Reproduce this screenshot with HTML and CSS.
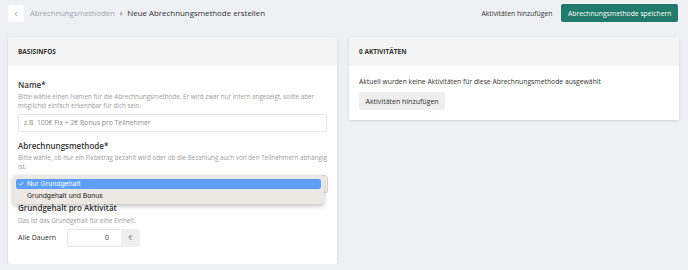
FILE: index.html
```html
<!DOCTYPE html>
<html lang="de">
<head>
    <meta charset="UTF-8">
    <meta name="viewport" content="width=device-width, initial-scale=1.0">
    <title>Neue Abrechnungsmethode erstellen</title>
    <link rel="stylesheet" href="styles.css">
</head>
<body>
    <div class="topbar">
        <div class="crumbs">
            <button type="button" class="back">&lsaquo;</button>
            <span class="crumb-parent">Abrechnungsmethoden</span>
            <span class="crumb-sep">&rsaquo;</span>
            <span class="crumb-current">Neue Abrechnungsmethode erstellen</span>
        </div>
        <div class="actions">
            <button type="button" class="link-btn">Aktivitäten hinzufügen</button>
            <button type="button" class="primary-btn">Abrechnungsmethode speichern</button>
        </div>
    </div>

    <div class="columns">
        <div class="card card-left">
            <div class="card-head">Basisinfos</div>
            <div class="card-body">
                <div class="field">
                    <div class="label">Name*</div>
                    <div class="help">Bitte wähle einen Namen für die Abrechnungsmethode. Er wird zwar nur intern angezeigt, sollte aber möglichst einfach erkennbar für dich sein.</div>
                    <input type="text" class="text-input" placeholder="z.B. 100€ Fix + 2€ Bonus pro Teilnehmer">
                </div>

                <div class="field field-select">
                    <div class="label">Abrechnungsmethode*</div>
                    <div class="help">Bitte wähle, ob nur ein Fixbetrag bezahlt wird oder ob die Bezahlung auch von den Teilnehmern abhängig ist.</div>
                    <div class="select-wrap">
                        <div class="select-box"></div>
                        <div class="popup">
                            <div class="option selected"><span class="check">✓</span>Nur Grundgehalt</div>
                            <div class="option">Grundgehalt und Bonus</div>
                        </div>
                    </div>
                </div>

                <div class="field field-last">
                    <div class="label">Grundgehalt pro Aktivität</div>
                    <div class="help">Das ist das Grundgehalt für eine Einheit.</div>
                    <div class="amount-row">
                        <span class="amount-label">Alle Dauern</span>
                        <div class="amount-group">
                            <input type="text" class="amount-input" value="0">
                            <span class="addon">€</span>
                        </div>
                    </div>
                </div>
            </div>
        </div>

        <div class="card card-right">
            <div class="card-head">0 Aktivitäten</div>
            <div class="card-body card-body-short">
                <p class="empty">Aktuell wurden keine Aktivitäten für diese Abrechnungsmethode ausgewählt</p>
                <button type="button" class="gray-btn">Aktivitäten hinzufügen</button>
            </div>
        </div>
    </div>
</body>
</html>
```

FILE: styles.css
```css
body {
    font-family: 'Open Sans', 'Noto Sans', sans-serif;
    background-color: #eef0f4;
    color: #333;
    margin: 0;
    padding: 4px 9px 0 8px;
}

button {
    font-family: inherit;
    cursor: pointer;
}

.topbar {
    display: flex;
    justify-content: space-between;
    align-items: center;
    height: 18px;
}

.crumbs {
    display: flex;
    align-items: center;
    font-size: 7.7px;
}

.back {
    width: 16px;
    height: 17px;
    padding: 0;
    border: none;
    border-radius: 2px;
    background-color: #fff;
    color: #999;
    font-size: 10px;
    line-height: 17px;
    margin-right: 6px;
}

.crumb-parent {
    color: #a3a6ab;
}

.crumb-sep {
    color: #555;
    font-size: 9px;
    margin: 0 5px 1px 5px;
}

.crumb-current {
    color: #333;
    font-size: 7.9px;
}

.actions {
    display: flex;
    align-items: center;
}

.link-btn {
    background: none;
    border: none;
    color: #333;
    font-size: 6.8px;
    padding: 0;
    margin-right: 9px;
}

.primary-btn {
    background-color: #217b6c;
    color: #fff;
    border: none;
    border-radius: 2px;
    font-size: 6.8px;
    height: 18px;
    padding: 0 6.5px;
    margin-right: 1px;
}

.columns {
    display: flex;
    align-items: flex-start;
    gap: 12px;
    margin-top: 15px;
}

.card {
    background-color: #fff;
    border-radius: 2px;
    box-shadow: 0 1px 3px rgba(0, 0, 0, 0.12);
}

.card-left {
    width: 329px;
}

.card-right {
    flex: 1;
}

.card-head {
    background-color: #f4f4f4;
    height: 29px;
    line-height: 29px;
    padding: 0 10px;
    font-size: 6.5px;
    font-weight: 700;
    text-transform: uppercase;
    color: #333;
    border-radius: 2px 2px 0 0;
}

.card-body {
    padding: 13px 10px 17px 10px;
}

.card-body-short {
    padding: 10px 10px 10px 10px;
}

.field {
    margin-bottom: 8px;
}

.field-select {
    margin-bottom: 9px;
}

.field-last {
    margin-bottom: 0;
}

.label {
    font-size: 8px;
    font-weight: 600;
    color: #333;
    line-height: 11px;
}

.help {
    font-size: 6.3px;
    color: #9c9c9c;
    line-height: 9px;
    margin-top: 2px;
}

.field-last .help {
    margin-top: 3px;
}

.text-input {
    display: block;
    box-sizing: border-box;
    width: 309px;
    height: 18px;
    margin-top: 3.5px;
    border: 1px solid #e6e6e6;
    border-radius: 2px;
    padding: 0 5px;
    font-family: inherit;
    font-size: 6.8px;
    color: #333;
}

.text-input::placeholder {
    color: #8c8c8c;
}

.select-wrap {
    position: relative;
    margin-top: 4px;
    height: 18px;
}

.select-box {
    box-sizing: border-box;
    width: 310px;
    height: 18px;
    border: 1px solid #d6d6d6;
    border-radius: 3px;
    background-color: #f6f6f6;
}

.popup {
    position: absolute;
    left: -5px;
    top: 0;
    width: 311px;
    box-sizing: border-box;
    padding: 4px 3px 3px 3px;
    background-color: #ece8e4;
    border-radius: 4px;
    box-shadow: 0 2px 5px rgba(0, 0, 0, 0.25);
}

.option {
    font-family: 'Inter', 'Open Sans', sans-serif;
    font-size: 6.8px;
    color: #222;
    height: 10px;
    line-height: 10px;
    padding-left: 11px;
}

.option.selected {
    background-color: #5b9ffb;
    color: #fff;
    border-radius: 2px;
    padding-left: 2px;
    margin-bottom: 2px;
}

.check {
    display: inline-block;
    width: 9px;
}

.amount-row {
    display: flex;
    align-items: center;
    margin-top: 4px;
}

.amount-label {
    font-size: 7px;
    color: #333;
    width: 49px;
}

.amount-group {
    display: flex;
    height: 18px;
}

.amount-input {
    box-sizing: border-box;
    width: 54px;
    height: 18px;
    border: 1px solid #e6e6e6;
    border-right: none;
    border-radius: 2px 0 0 2px;
    text-align: right;
    padding: 0 12px;
    font-family: inherit;
    font-size: 7px;
    color: #333;
}

.addon {
    width: 19px;
    height: 18px;
    line-height: 18px;
    text-align: center;
    background-color: #eeeeee;
    border-radius: 0 2px 2px 0;
    font-size: 7px;
    color: #888;
}

.empty {
    font-size: 6.8px;
    color: #333;
    margin: 0 0 4px 0;
    line-height: 12px;
}

.gray-btn {
    display: block;
    background-color: #eeeeee;
    border: none;
    border-radius: 2px;
    color: #333;
    font-size: 7px;
    height: 18px;
    padding: 0 6.5px;
}
```
